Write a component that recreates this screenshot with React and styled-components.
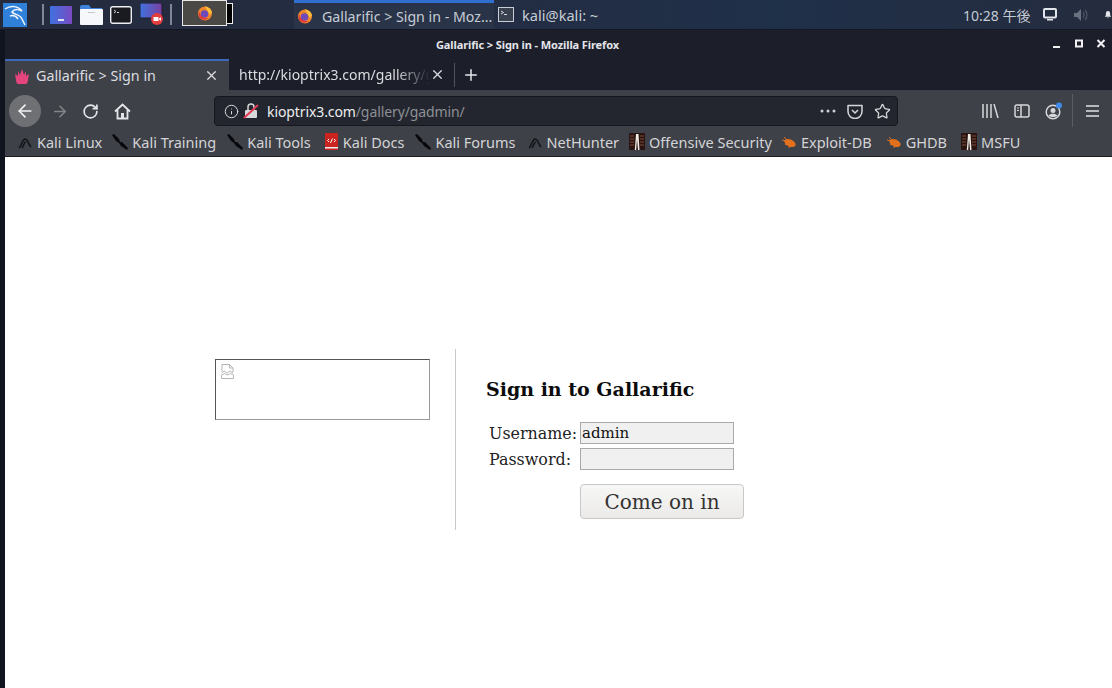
import React from "react";
import styled, { createGlobalStyle } from "styled-components";
import { ArrowLeft, ArrowRight, RotateCw, Info, Star, X, Plus } from "lucide-react";

const GlobalStyle = createGlobalStyle`
  html, body { margin: 0; padding: 0; height: 100%; }
  body {
    width: 1112px;
    height: 688px;
    overflow: hidden;
    background: #10141f;
    font-family: "Noto Sans", "Open Sans", sans-serif;
  }
`;

const Desktop = styled.div`
  display: flex;
  flex-direction: column;
  width: 1112px;
  height: 688px;
`;

/* top panel */
const Panel = styled.header`
  display: flex;
  align-items: stretch;
  height: 29px;
  flex: none;
  padding-left: 3px;
  background: linear-gradient(90deg, #252b3d 0%, #232d43 45%, #1f3049 70%, #252c3e 100%);
  border-bottom: 1px solid #141824;
`;

const Launcher = styled.div`
  display: flex;
  align-items: center;
  width: ${(p) => p.$w}px;
  margin-right: ${(p) => p.$mr || 0}px;
  flex: none;
`;

const PanelSep = styled.div`
  width: 2px;
  height: 21px;
  margin: 4px ${(p) => p.$mr}px 0 0;
  background: #7f8797;
  flex: none;
`;

const ActiveLauncher = styled.div`
  display: flex;
  align-items: center;
  justify-content: center;
  width: 45px;
  height: 26px;
  box-sizing: border-box;
  border: 1px solid #e8e8e8;
  background: #4a4945;
  flex: none;
`;

const BlackTab = styled.div`
  width: 6px;
  height: 21px;
  margin: 3px 61px 0 0;
  box-sizing: border-box;
  border: 1px solid #eee;
  border-left: 0;
  background: #000;
  flex: none;
`;

const Task = styled.div`
  display: flex;
  align-items: center;
  gap: ${(p) => p.$gap}px;
  width: ${(p) => p.$w}px;
  padding-left: ${(p) => p.$pl}px;
  box-sizing: border-box;
  flex: none;
  color: #c6ccd6;
  font-size: ${(p) => p.$size}px;
  background: ${(p) => (p.$active ? "#2a3448" : "transparent")};
  border-top: ${(p) => (p.$active ? "3px solid #2f6fd0" : "0")};
  white-space: nowrap;
`;

const Tray = styled.div`
  display: flex;
  align-items: center;
  margin-left: auto;
  color: #c4cad3;
  font-size: 14px;
`;

const Clock = styled.span`
  width: 80px;
  font-family: "Noto Sans", "Noto Sans CJK JP", sans-serif;
`;

/* firefox window */
const Win = styled.div`
  flex: 1;
  display: flex;
  flex-direction: column;
  margin-left: 5px;
  min-height: 0;
`;

const TitleBar = styled.div`
  position: relative;
  display: flex;
  align-items: center;
  justify-content: center;
  height: 29px;
  flex: none;
  padding-right: 62px;
  background: #1c1f2a;
  color: #e4e6ea;
  font-size: 11px;
  font-weight: 700;
  letter-spacing: -0.1px;
`;

const WinButtons = styled.div`
  position: absolute;
  top: 8px;
  right: 5px;
  display: flex;
  gap: 10px;
`;

const TabBar = styled.div`
  display: flex;
  align-items: stretch;
  height: 31px;
  flex: none;
  background: #1c1f2a;
`;

const ActiveTab = styled.div`
  display: flex;
  align-items: center;
  width: 224px;
  box-sizing: border-box;
  padding: 0 10px 0 9px;
  background: #3f4148;
  border-top: 2px solid #3d69b8;
  color: #dcdde0;
  font-size: 14.3px;
  flex: none;
`;

const TabLabel = styled.span`
  margin-left: 6px;
  flex: 1;
  white-space: nowrap;
`;

const GhostTab = styled.div`
  display: flex;
  align-items: center;
  width: 225px;
  box-sizing: border-box;
  padding: 0 9px 0 10px;
  color: #dcdde0;
  font-size: 14px;
  flex: none;
`;

const FadeText = styled.span`
  flex: 1;
  overflow: hidden;
  white-space: nowrap;
  -webkit-mask-image: linear-gradient(90deg, #000 82%, transparent 100%);
  mask-image: linear-gradient(90deg, #000 82%, transparent 100%);
`;

const TabSep = styled.div`
  width: 1px;
  height: 24px;
  align-self: center;
  background: #50535b;
`;

const NewTab = styled.div`
  display: flex;
  align-items: center;
  margin-left: 7px;
  color: #e6e7ea;
`;

const NavBar = styled.div`
  display: flex;
  align-items: center;
  height: 37px;
  box-sizing: border-box;
  flex: none;
  padding: 5px 0 0 4px;
  background: #3f4148;
  color: #d6d7da;
`;

const BackButton = styled.div`
  display: flex;
  align-items: center;
  justify-content: center;
  width: 32px;
  height: 32px;
  margin-right: 10px;
  border-radius: 50%;
  background: #6f7074;
  color: #f2f2f2;
  flex: none;
`;

const NavIcon = styled.div`
  display: flex;
  align-items: center;
  justify-content: center;
  width: ${(p) => p.$w || 18}px;
  margin-left: ${(p) => p.$ml || 0}px;
  margin-right: ${(p) => p.$mr || 0}px;
  flex: none;
  color: ${(p) => p.$color || "inherit"};
`;

const UrlBar = styled.div`
  display: flex;
  align-items: center;
  width: 684px;
  height: 30px;
  box-sizing: border-box;
  margin: 0 84px 0 0;
  padding: 0 6px 0 9px;
  background: #23262f;
  border: 1px solid #15171c;
  border-radius: 4px;
  font-size: 14px;
  letter-spacing: -0.1px;
  flex: none;
`;

const UrlHost = styled.span`
  margin-left: 8px;
  color: #eeeeef;
`;

const UrlPath = styled.span`
  flex: 1;
  color: #8d8f95;
`;

const NavSep = styled.div`
  width: 1px;
  height: 34px;
  margin: 0 13px 0 9px;
  background: #5b5d64;
`;

const Bookmarks = styled.nav`
  display: flex;
  align-items: center;
  gap: 11px;
  flex: none;
  padding-left: 12px;
  background: #3f4148;
  border-bottom: 1px solid #1a1c22;
  box-sizing: border-box;
  height: 30px;
`;

const Mark = styled.div`
  display: flex;
  align-items: center;
  gap: 4px;
  margin-left: ${(p) => p.$ml || 0}px;
  color: #d3d4d7;
  font-size: 14.5px;
  white-space: nowrap;
`;

/* page */
const Page = styled.main`
  flex: 1;
  display: flex;
  align-items: flex-start;
  padding: 192px 0 0 210px;
  background: #fff;
  font-family: "DejaVu Serif", serif;
  color: #111;
`;

const ImageBox = styled.div`
  display: flex;
  align-items: flex-start;
  width: 215px;
  height: 61px;
  box-sizing: border-box;
  margin: 10px 25px 0 0;
  padding: 4px 5px;
  border: 1px solid #555;
  border-right-color: #999;
  border-bottom-color: #999;
  flex: none;
`;

const SignIn = styled.section`
  width: 290px;
  height: 181px;
  box-sizing: border-box;
  padding: 27px 0 0 30px;
  border-left: 1px solid #c9c9c9;
  flex: none;
`;

const Heading = styled.h1`
  margin: 0 0 20px;
  font-size: 19px;
  line-height: 26px;
  font-weight: 700;
  color: #0c0c0c;
`;

const Row = styled.div`
  display: flex;
  align-items: center;
  height: 22px;
  margin-bottom: 4px;
  padding-left: 3px;
  font-size: 15.9px;
  color: #222;
`;

const Label = styled.label`
  width: 91px;
  flex: none;
`;

const Field = styled.input`
  width: 154px;
  height: 22px;
  box-sizing: border-box;
  margin: 0;
  padding: 0 1px;
  border: 1px solid #a9a9a9;
  background: #f0f0f0;
  font-family: "DejaVu Serif", serif;
  font-size: 15px;
  color: #111;
  outline: none;
`;

const Submit = styled.button`
  display: block;
  width: 164px;
  height: 35px;
  margin: 14px 0 0 94px;
  padding: 0;
  border: 1px solid #c8c8c8;
  border-radius: 4px;
  background: linear-gradient(#f7f7f6, #ebeae9);
  font-family: "DejaVu Serif", serif;
  font-size: 20px;
  color: #333;
`;

/* drawings */
const KaliLogo = () => (
  <svg width="24" height="24" viewBox="0 0 24 24">
    <rect width="24" height="24" fill="#2f80d8" />
    <path d="M2 6c6-4 13-3 17 2-4-2-8-2-10 1 2 3 8 2 10 7l3 6M7 13c3-1 6 0 8 3" fill="none" stroke="#f1f6fb" strokeWidth="1.5" />
  </svg>
);

const Workspace = () => (
  <svg width="23" height="18" viewBox="0 0 23 18">
    <defs>
      <linearGradient id="ws" x1="0" x2="1">
        <stop offset="0" stopColor="#3f72df" />
        <stop offset="1" stopColor="#7a4bc4" />
      </linearGradient>
    </defs>
    <rect width="22" height="18" rx="1" fill="url(#ws)" />
    <rect x="8" y="13" width="6" height="2" fill="#dfe4f5" />
  </svg>
);

const Folder = () => (
  <svg width="23" height="20" viewBox="0 0 23 20">
    <path d="M0 2a2 2 0 0 1 2-2h7l2 3h11v5H0z" fill="#3f82dc" />
    <rect y="4" width="23" height="16" rx="1" fill="#f5f7fa" />
    <rect x="8" y="7" width="7" height="1" fill="#c4cbd4" />
  </svg>
);

const TerminalIcon = () => (
  <svg width="22" height="18" viewBox="0 0 22 18">
    <rect x="0.7" y="0.7" width="20.6" height="16.6" rx="2" fill="#191b20" stroke="#eceef0" strokeWidth="1.4" />
    <path d="M4 4l2 1.5L4 7" fill="none" stroke="#cfd2d6" />
    <rect x="7" y="6" width="2" height="1" fill="#cfd2d6" />
  </svg>
);

const Recorder = () => (
  <svg width="24" height="23" viewBox="0 0 24 23">
    <defs>
      <linearGradient id="rc" x1="0" x2="1">
        <stop offset="0" stopColor="#3f72df" />
        <stop offset="1" stopColor="#7a3fa0" />
      </linearGradient>
    </defs>
    <rect width="22" height="15" fill="url(#rc)" stroke="#1a1a26" />
    <circle cx="17" cy="16" r="6" fill="#e33e3e" />
    <rect x="13.5" y="14" width="5" height="4" fill="#fff" />
    <path d="M19 15.5l2-1.2v3.4l-2-1.2z" fill="#fff" />
  </svg>
);

const Firefox = ({ size = 16 }) => (
  <svg width={size} height={size} viewBox="0 0 16 16">
    <circle cx="8" cy="8.5" r="7" fill="#f0862c" />
    <path d="M8 1c3 1 6 3 7 6l-2 3-3-5z" fill="#f9c13c" />
    <circle cx="7.5" cy="9" r="3.8" fill="#6f4ab8" />
    <path d="M2 6c1 5 5 8 10 7-2 2-6 2-8 1S1 9 2 6z" fill="#e23c3a" />
  </svg>
);

const HandFavicon = () => (
  <svg width="16" height="16" viewBox="0 0 16 16">
    <path d="M1 6l3 2 0-5 2 4 2-6 2 6 2-4 0 5 3-2-1 6a5 5 0 0 1-12 0z" fill="#e4457d" />
  </svg>
);

const SmallTerm = () => (
  <svg width="16" height="15" viewBox="0 0 16 15">
    <rect x="0.5" y="0.5" width="15" height="14" fill="#39404e" stroke="#c9ced6" />
    <path d="M3 4l2.5 1.5L3 7" fill="none" stroke="#d8dbe0" />
    <rect x="6" y="7" width="3" height="1" fill="#d8dbe0" />
  </svg>
);

const Monitor = () => (
  <svg width="14" height="13" viewBox="0 0 14 13">
    <rect x="1" y="1" width="12" height="8.5" rx="1" fill="none" stroke="#e3e6ea" strokeWidth="2" />
    <rect x="4" y="11" width="6" height="1.5" fill="#e3e6ea" />
  </svg>
);

const Speaker = () => (
  <svg width="15" height="14" viewBox="0 0 15 14">
    <path d="M1 5h3l4-4v12l-4-4H1z" fill="#697080" />
    <path d="M10 4c1.5 2 1.5 4 0 6M12 2c2.5 3 2.5 7 0 10" fill="none" stroke="#4e5565" strokeWidth="1.2" />
  </svg>
);

const Bell = () => (
  <svg width="15" height="15" viewBox="0 0 15 15">
    <path d="M7.5 1a4 4 0 0 1 4 4v4l2 2.5h-12L3.500 9V5a4 4 0 0 1 4-4zM6 13h3l-1.500 2z" fill="#e3e6ea" />
  </svg>
);

const WinMin = () => (
  <svg width="12" height="12" viewBox="0 0 12 12"><rect x="2" y="8" width="7" height="2" fill="#f0f0f2" /></svg>
);
const WinMax = () => (
  <svg width="12" height="12" viewBox="0 0 12 12"><rect x="3" y="2.500" width="6" height="6" fill="none" stroke="#f0f0f2" strokeWidth="2" /></svg>
);
const WinClose = () => (
  <svg width="12" height="12" viewBox="0 0 12 12"><path d="M2.500 2l7 7M9.500 2l-7 7" stroke="#f0f0f2" strokeWidth="2" /></svg>
);

const HomeIcon = () => (
  <svg width="17" height="17" viewBox="0 0 17 17">
    <path d="M1 8.500l7.500-7 7.500 7M3.500 7v8.500h10V7" fill="none" stroke="#e4e5e8" strokeWidth="1.8" />
    <rect x="7" y="10" width="3" height="5.500" fill="#e4e5e8" />
  </svg>
);

const BrokenLock = () => (
  <svg width="16" height="16" viewBox="0 0 16 16">
    <rect x="2" y="7" width="12" height="8" rx="1" fill="#d8d8da" />
    <path d="M5 7V4a3 3 0 0 1 6 0v3" fill="none" stroke="#d8d8da" strokeWidth="1.5" />
    <path d="M1 15L15 2" stroke="#e23c55" strokeWidth="2" />
  </svg>
);

const Pocket = () => (
  <svg width="16" height="15" viewBox="0 0 16 15">
    <path d="M1 1.500h14v6a7 7 0 0 1-14 0z" fill="none" stroke="#d6d7da" strokeWidth="1.500" strokeLinejoin="round" />
    <path d="M5 6l3 3 3-3" fill="none" stroke="#d6d7da" strokeWidth="1.500" />
  </svg>
);

const Dots = () => (
  <svg width="16" height="4" viewBox="0 0 16 4">
    <circle cx="2" cy="2" r="1.500" fill="#cfd0d3" />
    <circle cx="8" cy="2" r="1.500" fill="#cfd0d3" />
    <circle cx="14" cy="2" r="1.500" fill="#cfd0d3" />
  </svg>
);

const Library = () => (
  <svg width="17" height="14" viewBox="0 0 17 14">
    <path d="M1 0v14M5 0v14M9 0v14M12 0l4 14" stroke="#d6d7da" strokeWidth="1.500" />
  </svg>
);

const SidebarIcon = () => (
  <svg width="16" height="14" viewBox="0 0 16 14">
    <rect x="1" y="1" width="14" height="12" rx="2" fill="none" stroke="#d6d7da" strokeWidth="1.500" />
    <path d="M7 1v12" stroke="#d6d7da" strokeWidth="1.500" />
    <path d="M3 4h2M3 6.500h2" stroke="#d6d7da" />
  </svg>
);

const Account = () => (
  <svg width="18" height="18" viewBox="0 0 18 18">
    <circle cx="8" cy="10" r="6.800" fill="none" stroke="#d6d7da" strokeWidth="1.500" />
    <circle cx="8" cy="8.500" r="2.500" fill="#d6d7da" />
    <path d="M3.500 13.500c2-2.500 7-2.500 9 0-2 2-7 2-9 0z" fill="#d6d7da" />
    <circle cx="14" cy="3.500" r="3" fill="#3f8be8" />
  </svg>
);

const Hamburger = () => (
  <svg width="13" height="12" viewBox="0 0 13 12">
    <path d="M0 1h13M0 6h13M0 11h13" stroke="#e0e1e4" strokeWidth="1.500" />
  </svg>
);

const KaliMark = () => (
  <svg width="16" height="16" viewBox="0 0 16 16">
    <path d="M2 14c2-1 3-8 6-9 3 0 3 5 6 8M5 14c2-3 2-6 4-6" fill="none" stroke="#15161a" strokeWidth="1.700" />
  </svg>
);

const KnifeMark = () => (
  <svg width="16" height="16" viewBox="0 0 16 16">
    <path d="M0 1l2-1 5 5 1 3 2 0 6 6-1 2-6-4-2-3-3-2z" fill="#08080c" />
  </svg>
);

const DocsMark = () => (
  <svg width="15" height="17" viewBox="0 0 15 17">
    <rect x="1" y="0" width="13" height="17" rx="1" fill="#c9241f" />
    <rect x="1" y="14" width="13" height="1.500" fill="#eee" />
    <path d="M5 6L3.500 7.500 5 9M10 6l1.500 1.500L10 9M8.500 5.500l-2 4.500" fill="none" stroke="#fff" strokeWidth="1" />
  </svg>
);

const OffsecMark = () => (
  <svg width="16" height="17" viewBox="0 0 16 17">
    <rect width="16" height="17" fill="#2a1412" />
    <path d="M1 3h4M1 6h4M1 9h4M11 3h4M11 6h4M11 9h4M1 12h4M11 12h4" stroke="#7d4a38" />
    <path d="M7 1h2.500l1 16h-1.500L8 6l-.8 11H5.800z" fill="#f1ece6" />
  </svg>
);

const BugMark = () => (
  <svg width="16" height="14" viewBox="0 0 16 14">
    <ellipse cx="9" cy="8" rx="6" ry="3.500" transform="rotate(25 9 8)" fill="#e3701c" />
    <path d="M1 5l4 1M3 2l3 3M4 10l3-2M8 13l1-4" stroke="#e3701c" />
  </svg>
);

const BrokenImage = () => (
  <svg width="13" height="15" viewBox="0 0 13 15">
    <path d="M1 7.500V.5h7.500L12 4v4" fill="none" stroke="#b5b5b5" />
    <path d="M8.500.5V4H12M.5 9l2.500-2 3 2 3-2 3 2" fill="none" stroke="#b5b5b5" />
    <path d="M.5 11l3-1.500 3 1.500 3-1.500 3 1.500M.5 11v3.500h12V11" fill="none" stroke="#b5b5b5" />
  </svg>
);

const marks = [
  { icon: <KaliMark />, label: "Kali Linux" },
  { icon: <KnifeMark />, label: "Kali Training", ml: -1 },
  { icon: <KnifeMark />, label: "Kali Tools" },
  { icon: <DocsMark />, label: "Kali Docs", ml: 2 },
  { icon: <KnifeMark />, label: "Kali Forums" },
  { icon: <KaliMark />, label: "NetHunter" },
  { icon: <OffsecMark />, label: "Offensive Security", ml: -1 },
  { icon: <BugMark />, label: "Exploit-DB", ml: -2 },
  { icon: <BugMark />, label: "GHDB", ml: 3 },
  { icon: <OffsecMark />, label: "MSFU", ml: 3 },
];

export default function App() {
  return (
    <Desktop>
      <GlobalStyle />
      <Panel>
        <Launcher $w={24} $mr={15}><KaliLogo /></Launcher>
        <PanelSep $mr={6} />
        <Launcher $w={23} $mr={7}><Workspace /></Launcher>
        <Launcher $w={23} $mr={7}><Folder /></Launcher>
        <Launcher $w={22} $mr={8}><TerminalIcon /></Launcher>
        <Launcher $w={24} $mr={6}><Recorder /></Launcher>
        <PanelSep $mr={10} />
        <ActiveLauncher><Firefox /></ActiveLauncher>
        <BlackTab />
        <Task $active $w={200} $pl={3} $gap={9} $size={14.2}>
          <Firefox />
          Gallarific &gt; Sign in - Moz...
        </Task>
        <Task $w={180} $pl={4} $gap={8} $size={14.6}>
          <SmallTerm />
          kali@kali: ~
        </Task>
        <Tray>
          <Clock>10:28 午後</Clock>
          <Launcher $w={14} $mr={16}><Monitor /></Launcher>
          <Launcher $w={15} $mr={16}><Speaker /></Launcher>
          <Launcher $w={8}><Bell /></Launcher>
        </Tray>
      </Panel>
      <Win>
        <TitleBar>
          Gallarific &gt; Sign in - Mozilla Firefox
          <WinButtons>
            <WinMin />
            <WinMax />
            <WinClose />
          </WinButtons>
        </TitleBar>
        <TabBar>
          <ActiveTab>
            <HandFavicon />
            <TabLabel>Gallarific &gt; Sign in</TabLabel>
            <X size={15} strokeWidth={2} />
          </ActiveTab>
          <GhostTab>
            <FadeText>http://kioptrix3.com/gallery/gadmin/</FadeText>
            <X size={15} strokeWidth={2} />
          </GhostTab>
          <TabSep />
          <NewTab><Plus size={18} strokeWidth={2} /></NewTab>
        </TabBar>
        <NavBar>
          <BackButton><ArrowLeft size={20} strokeWidth={2} /></BackButton>
          <NavIcon $mr={12} $color="#85868a"><ArrowRight size={19} strokeWidth={2} /></NavIcon>
          <NavIcon $mr={14} $color="#e4e5e8"><RotateCw size={17} strokeWidth={2.4} /></NavIcon>
          <NavIcon $mr={83}><HomeIcon /></NavIcon>
          <UrlBar>
            <Info size={15} strokeWidth={1.6} />
            <NavIcon $w={16} $ml={4}><BrokenLock /></NavIcon>
            <UrlHost>kioptrix3.com</UrlHost>
            <UrlPath>/gallery/gadmin/</UrlPath>
            <NavIcon $w={16} $mr={11}><Dots /></NavIcon>
            <NavIcon $w={16} $mr={11}><Pocket /></NavIcon>
            <Star size={17} strokeWidth={1.8} />
          </UrlBar>
          <NavIcon $w={17} $mr={15}><Library /></NavIcon>
          <NavIcon $w={16} $mr={15}><SidebarIcon /></NavIcon>
          <NavIcon $w={18}><Account /></NavIcon>
          <NavSep />
          <NavIcon $w={13}><Hamburger /></NavIcon>
        </NavBar>
        <Bookmarks>
          {marks.map((m) => (
            <Mark key={m.label} $ml={m.ml}>
              {m.icon}
              {m.label}
            </Mark>
          ))}
        </Bookmarks>
        <Page>
          <ImageBox><BrokenImage /></ImageBox>
          <SignIn>
            <Heading>Sign in to Gallarific</Heading>
            <form>
              <Row>
                <Label htmlFor="user">Username:</Label>
                <Field id="user" type="text" defaultValue="admin" />
              </Row>
              <Row>
                <Label htmlFor="pass">Password:</Label>
                <Field id="pass" type="password" />
              </Row>
              <Submit type="button">Come on in</Submit>
            </form>
          </SignIn>
        </Page>
      </Win>
    </Desktop>
  );
}
